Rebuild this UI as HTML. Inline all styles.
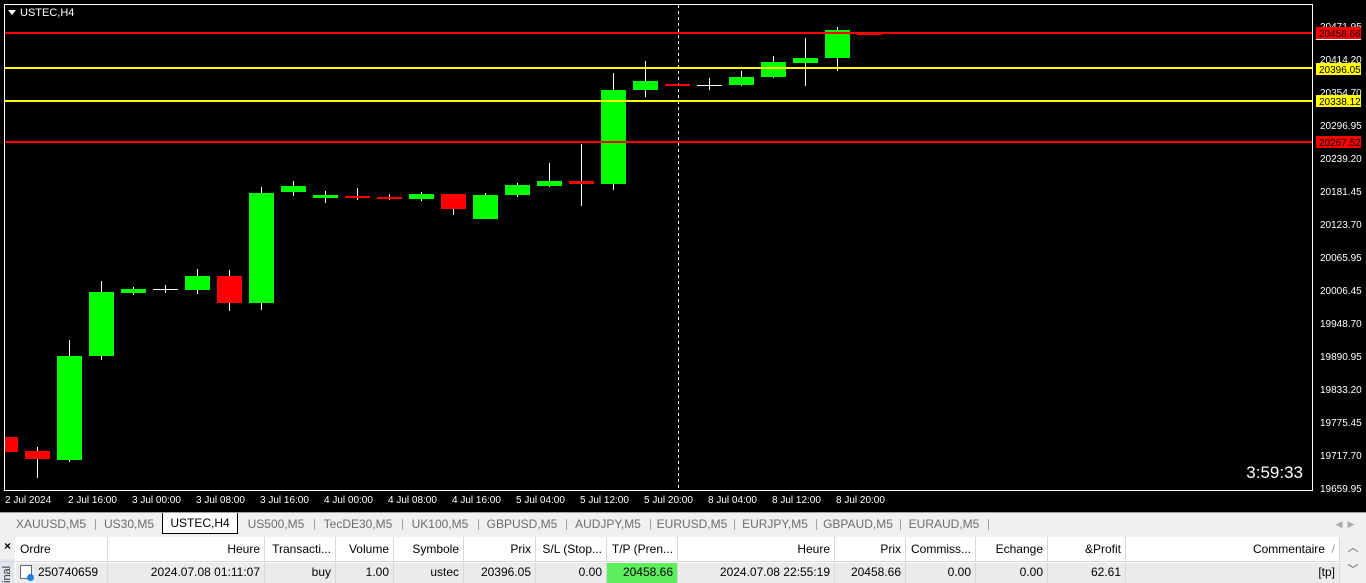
<!DOCTYPE html>
<html><head><meta charset="utf-8"><style>
*{margin:0;padding:0;box-sizing:border-box}
body{width:1366px;height:583px;overflow:hidden;background:#f0f0f0;font-family:"Liberation Sans",sans-serif;position:relative}
#chart{position:absolute;left:0;top:0;width:1366px;height:512px;background:#000}
.tabs{position:absolute;left:0;top:512px;width:1366px;height:22px;background:#f0f0f0;border-top:1px solid #a0a0a0;font-size:12px;color:#6d6d6d}
.tab{position:absolute;top:3px;height:16px;line-height:16px;text-align:center}
.sep{position:absolute;top:6px;width:1px;height:11px;background:#a0a0a0}
.act{position:absolute;top:0;height:21px;background:#fff;border:1px solid #000;border-top:none;color:#000;line-height:20px;text-align:center}
.tbl{position:absolute;left:0;top:537px;width:1366px;height:46px;background:#fff;font-size:12px;color:#000}
.c{position:absolute;height:24px;line-height:24px;white-space:nowrap;overflow:hidden;padding:0 4px;border-right:1px solid #d8d8d8}
.r{position:absolute;top:26px;height:20px;line-height:19px;white-space:nowrap;overflow:hidden;padding:0 4px;background:#ebebeb;border-right:1px solid #d8d8d8}
.rt{text-align:right}
</style></head><body>
<div id="chart">
<svg width="1366" height="512" xmlns="http://www.w3.org/2000/svg" font-family="Liberation Sans, sans-serif">
<rect x="4.5" y="4.5" width="1308" height="486" fill="none" stroke="#fff"/>
<line x1="678.5" y1="5" x2="678.5" y2="490" stroke="#fff" stroke-dasharray="3,3"/>
<g id="cand"></g>
<line x1="5" y1="33" x2="1312" y2="33" stroke="#f00" stroke-width="2"/>
<line x1="5" y1="68" x2="1312" y2="68" stroke="#ff0" stroke-width="2"/>
<line x1="5" y1="101" x2="1312" y2="101" stroke="#ff0" stroke-width="2"/>
<line x1="5" y1="142" x2="1312" y2="142" stroke="#f00" stroke-width="2"/>
<polygon points="8,10 16,10 12,15" fill="#fff"/>
<text x="20" y="16" fill="#fff" font-size="11">USTEC,H4</text>
<g fill="#fff" font-size="10">
<text x="1320" y="30">20471.95</text><text x="1320" y="63">20414.20</text><text x="1320" y="96">20354.70</text><text x="1320" y="129">20296.95</text><text x="1320" y="162">20239.20</text><text x="1320" y="195">20181.45</text><text x="1320" y="228">20123.70</text><text x="1320" y="261">20065.95</text><text x="1320" y="294">20006.45</text><text x="1320" y="327">19948.70</text><text x="1320" y="360">19890.95</text><text x="1320" y="393">19833.20</text><text x="1320" y="426">19775.45</text><text x="1320" y="459">19717.70</text><text x="1320" y="492">19659.95</text>
</g>
<rect x="1316" y="27" width="45" height="12" fill="#f00"/><rect x="1316" y="39" width="45" height="1" fill="#fff"/>
<rect x="1316" y="63" width="45" height="12" fill="#ff0"/>
<rect x="1316" y="95" width="45" height="12" fill="#ff0"/>
<rect x="1316" y="136" width="45" height="12" fill="#f00"/>
<g font-size="10"><text x="1319" y="37" fill="#000">20458.66</text><text x="1319" y="73" fill="#000">20396.05</text><text x="1319" y="105" fill="#000">20338.12</text><text x="1319" y="146" fill="#000">20267.52</text></g>
<g fill="#fff" font-size="10">
<text x="5" y="503">2 Jul 2024</text><text x="68" y="503">2 Jul 16:00</text><text x="132" y="503">3 Jul 00:00</text><text x="196" y="503">3 Jul 08:00</text><text x="260" y="503">3 Jul 16:00</text><text x="324" y="503">4 Jul 00:00</text><text x="388" y="503">4 Jul 08:00</text><text x="452" y="503">4 Jul 16:00</text><text x="516" y="503">5 Jul 04:00</text><text x="580" y="503">5 Jul 12:00</text><text x="644" y="503">5 Jul 20:00</text><text x="708" y="503">8 Jul 04:00</text><text x="772" y="503">8 Jul 12:00</text><text x="836" y="503">8 Jul 20:00</text>
</g>
<text x="1303" y="478" fill="#fff" font-size="17" text-anchor="end">3:59:33</text>
</svg>
</div>
<div class="tabs">
<div class="tab" style="left:8px;width:86px">XAUUSD,M5</div><div class="sep" style="left:95px"></div>
<div class="tab" style="left:96px;width:66px">US30,M5</div>
<div class="act" style="left:162px;width:76px">USTEC,H4</div>
<div class="tab" style="left:240px;width:72px">US500,M5</div><div class="sep" style="left:314px"></div>
<div class="tab" style="left:316px;width:84px">TecDE30,M5</div><div class="sep" style="left:402px"></div>
<div class="tab" style="left:404px;width:72px">UK100,M5</div><div class="sep" style="left:478px"></div>
<div class="tab" style="left:480px;width:84px">GBPUSD,M5</div><div class="sep" style="left:566px"></div>
<div class="tab" style="left:568px;width:80px">AUDJPY,M5</div><div class="sep" style="left:650px"></div>
<div class="tab" style="left:652px;width:80px">EURUSD,M5</div><div class="sep" style="left:734px"></div>
<div class="tab" style="left:736px;width:78px">EURJPY,M5</div><div class="sep" style="left:816px"></div>
<div class="tab" style="left:818px;width:80px">GBPAUD,M5</div><div class="sep" style="left:900px"></div>
<div class="tab" style="left:902px;width:84px">EURAUD,M5</div><div class="sep" style="left:988px"></div>
<div class="tab" style="left:1330px;width:30px;color:#aaa;font-size:9px">◀ &nbsp;▶</div>
</div>
<div class="tbl">
<div style="position:absolute;left:0;top:0;width:15px;height:46px;background:#f0f0f0"></div>
<div style="position:absolute;left:4px;top:2px;font-size:12px;font-weight:bold">×</div>
<div style="position:absolute;left:0;top:22px;width:14px;height:24px;background:#dfe6ee;font-size:11px;color:#333;writing-mode:vertical-rl;transform:rotate(180deg);line-height:14px">inal</div>
<div class="c" style="left:16px;width:92px">Ordre</div>
<div class="c rt" style="left:108px;width:157px">Heure</div>
<div class="c rt" style="left:265px;width:71px">Transacti...</div>
<div class="c rt" style="left:336px;width:58px">Volume</div>
<div class="c rt" style="left:394px;width:70px">Symbole</div>
<div class="c rt" style="left:464px;width:72px">Prix</div>
<div class="c rt" style="left:536px;width:71px">S/L (Stop...</div>
<div class="c rt" style="left:607px;width:71px">T/P (Pren...</div>
<div class="c rt" style="left:678px;width:157px">Heure</div>
<div class="c rt" style="left:835px;width:71px">Prix</div>
<div class="c rt" style="left:906px;width:70px">Commiss...</div>
<div class="c rt" style="left:976px;width:72px">Echange</div>
<div class="c rt" style="left:1048px;width:78px">&amp;Profit</div>
<div class="c rt" style="left:1126px;width:214px">Commentaire &nbsp;<span style="color:#999">/</span></div>
<div style="position:absolute;left:0;top:24px;width:1340px;height:1px;background:#d8d8d8"></div>
<div class="r" style="left:16px;width:92px"><span style="display:inline-block;width:12px;height:14px;border:1px solid #666;vertical-align:-3px;margin-right:6px;background:#fff;position:relative"><span style="position:absolute;right:-3px;bottom:-3px;width:7px;height:7px;border-radius:50%;background:#1e7fd8"></span></span>250740659</div>
<div class="r rt" style="left:108px;width:157px">2024.07.08 01:11:07</div>
<div class="r rt" style="left:265px;width:71px">buy</div>
<div class="r rt" style="left:336px;width:58px">1.00</div>
<div class="r rt" style="left:394px;width:70px">ustec</div>
<div class="r rt" style="left:464px;width:72px">20396.05</div>
<div class="r rt" style="left:536px;width:71px">0.00</div>
<div class="r rt" style="left:607px;width:71px;background:#5ded5d">20458.66</div>
<div class="r rt" style="left:678px;width:157px">2024.07.08 22:55:19</div>
<div class="r rt" style="left:835px;width:71px">20458.66</div>
<div class="r rt" style="left:906px;width:70px">0.00</div>
<div class="r rt" style="left:976px;width:72px">0.00</div>
<div class="r rt" style="left:1048px;width:78px">62.61</div>
<div class="r rt" style="left:1126px;width:214px">[tp]</div>
<div style="position:absolute;left:1340px;top:0;width:26px;height:46px;background:#f0f0f0;color:#555;font-size:11px;text-align:center;line-height:22px">︿<br>﹀</div>
</div>
<script>
var d=[[10,437,452,437,452,0,13],[37,451,459,447,478,0],[69,356,460,340,462,1],[101,292,356,281,360,1],[133,289,293,287,295,1],[165,289,289,285,293,2],[197,276,290,269,294,1],[229,276,303,270,311,0],[261,193,303,187,310,1],[293,186,192,181,196,1],[325,195,198,191,203,1],[357,196,198,188,200,0],[389,197,199,194,200,0],[421,194,199,192,201,1],[453,194,209,194,215,0],[485,195,219,193,219,1],[517,185,195,183,197,1],[549,181,186,163,187,1],[581,181,184,144,206,0],[613,90,184,73,190,1],[645,81,90,61,97,1],[677,84,86,84,86,0],[709,85,85,78,90,2],[741,77,85,71,86,1],[773,62,77,56,78,1],[805,58,63,38,86,1],[837,30,58,27,71,1],[869,33,35,33,35,0]];
var s='';d.forEach(function(c){var col=c[5]==1?'#00ff00':c[5]==0?'#ff0000':'#fff';var x=c[0];
s+='<line x1="'+(x+.5)+'" y1="'+c[3]+'" x2="'+(x+.5)+'" y2="'+c[4]+'" stroke="#fff"/>';
if(c[5]==2)s+='<line x1="'+(x-12)+'" y1="'+(c[1]+.5)+'" x2="'+(x+13)+'" y2="'+(c[1]+.5)+'" stroke="#fff"/>';
else{var l=x-12,w=25;if(c[6]){l=5;w=c[6];}s+='<rect x="'+l+'" y="'+c[1]+'" width="'+w+'" height="'+Math.max(2,c[2]-c[1])+'" fill="'+col+'"/>';}});
document.getElementById('cand').innerHTML=s;
</script>
</body></html>
